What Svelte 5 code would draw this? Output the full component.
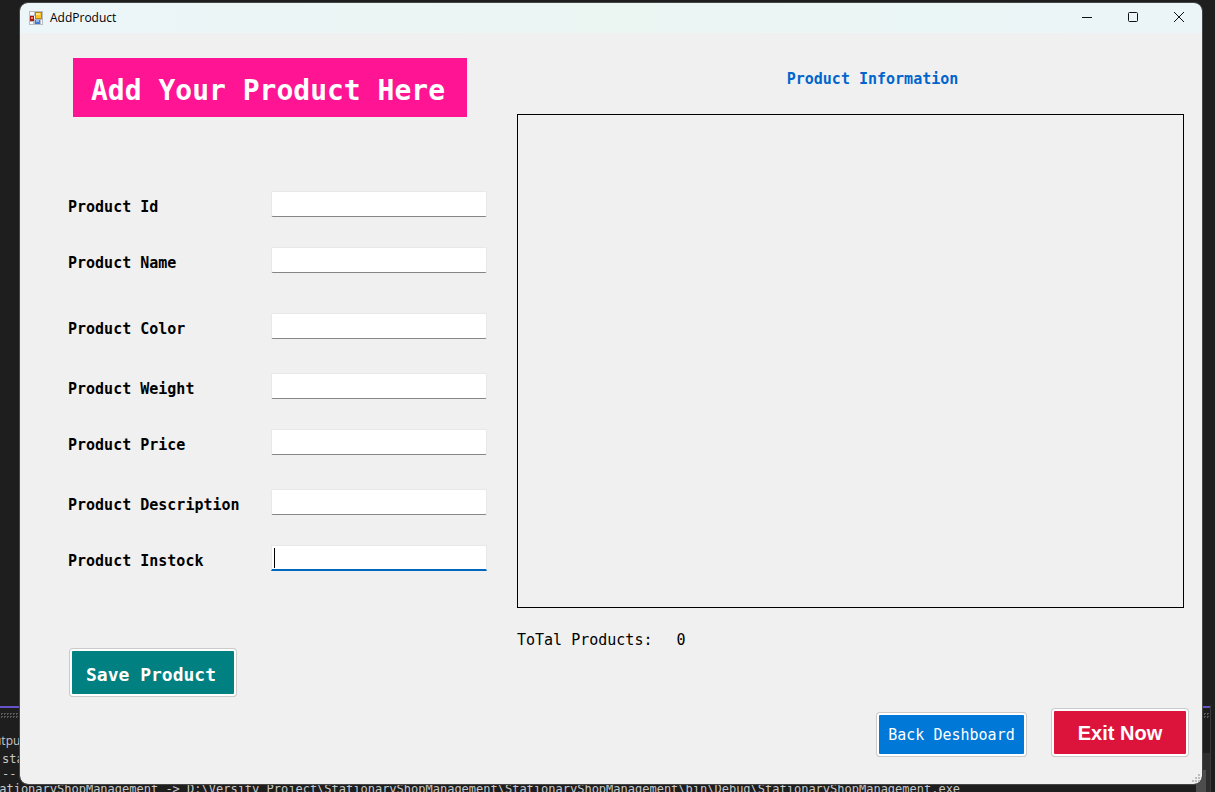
<script>
  const fields = [
    { id: 'product-id', label: 'Product Id', space: '' },
    { id: 'product-name', label: 'Product Name', space: '' },
    { id: 'product-color', label: 'Product Color', space: 'wide' },
    { id: 'product-weight', label: 'Product Weight', space: 'medium' },
    { id: 'product-price', label: 'Product Price', space: '' },
    { id: 'product-description', label: 'Product Description', space: 'medium' },
    { id: 'product-instock', label: 'Product Instock', space: '' }
  ];

  let values = $state(fields.map(() => ''));
  let active = $state('product-instock');
  let total = $state(0);

  function save(event) {
    event.preventDefault();
    total += 1;
    values = fields.map(() => '');
  }
</script>

<div class="desktop">
  <div class="console">
    <div class="console-bar"></div>
    <div class="console-title">utput</div>
    <div class="console-line">sta</div>
    <div class="console-line">--</div>
    <div class="console-line path">tationaryShopManagement -&gt; D:\Versity Project\StationaryShopManagement\StationaryShopManagement\bin\Debug\StationaryShopManagement.exe</div>
    <div class="scroll-track"><div class="scroll-thumb"></div></div>
  </div>

  <div class="window">
    <header class="titlebar">
      <svg class="app-icon" width="14" height="14" viewBox="0 0 14 14" shape-rendering="crispEdges" aria-hidden="true">
        <rect width="14" height="14" fill="#b9bcc3" />
        <rect x="1" y="1" width="4" height="3" fill="#f5f6f8" />
        <rect x="1" y="11" width="3" height="2" fill="#f5f6f8" />
        <rect x="12" y="9" width="1" height="4" fill="#f5f6f8" />
        <rect x="5" y="5" width="1" height="3" fill="#f5f6f8" />
        <rect x="1" y="5" width="4" height="5" fill="#a91b12" />
        <rect x="2" y="6" width="2" height="2" fill="#ef8b7a" />
        <rect x="6" y="1" width="7" height="7" fill="#b98508" />
        <rect x="7" y="2" width="5" height="5" fill="#fbc62b" />
        <rect x="7" y="2" width="4" height="2" fill="#ffe28a" />
        <rect x="6" y="9" width="5" height="4" fill="#3c78d8" />
        <rect x="7" y="9" width="3" height="2" fill="#8db8f5" />
      </svg>
      <span class="caption">AddProduct</span>
      <div class="window-buttons">
        <button type="button" aria-label="Minimize">
          <svg width="12" height="12" viewBox="0 0 12 12"><path d="M1 5.5h10" /></svg>
        </button>
        <button type="button" aria-label="Maximize">
          <svg width="12" height="12" viewBox="0 0 12 12"><rect x="1.5" y="0.5" width="9" height="9" rx="1" /></svg>
        </button>
        <button type="button" aria-label="Close">
          <svg width="12" height="12" viewBox="0 0 12 12"><path d="M1 0l10 10M11 0L1 10" /></svg>
        </button>
      </div>
    </header>

    <main>
      <section class="entry">
        <h1>Add Your Product Here</h1>
        <form onsubmit={save}>
          {#each fields as field, i}
            <div class="row {field.space}" class:active={active === field.id}>
              <label for={field.id}>{field.label}</label>
              <div class="box">
                <input id={field.id} type="text" bind:value={values[i]} onfocus={() => (active = field.id)} />
                {#if active === field.id && values[i] === ''}<span class="caret"></span>{/if}
              </div>
            </div>
          {/each}
          <button class="action save" type="submit">Save Product</button>
        </form>
      </section>

      <section class="info">
        <h2>Product Information</h2>
        <div class="products"></div>
        <p class="total"><span>ToTal Products:</span><span>{total}</span></p>
        <div class="actions">
          <button class="action back" type="button">Back Deshboard</button>
          <button class="action exit" type="button">Exit Now</button>
        </div>
      </section>
    </main>

    <svg class="grip" width="8" height="8" viewBox="0 0 8 8" shape-rendering="crispEdges" aria-hidden="true">
      <path d="M6 0h2v2h-2zM6 3h2v2h-2zM3 3h2v2h-2zM0 6h2v2h-2zM3 6h2v2h-2zM6 6h2v2h-2z" />
    </svg>
  </div>
</div>

<style>
  :global(body) {
    margin: 0;
    background: #1e1e1e;
  }

  .desktop {
    position: relative;
    box-sizing: border-box;
    display: flex;
    min-height: 100vh;
    padding: 3px 13px 8px 20px;
    overflow: hidden;
    background: #1e1e1e;
    font-family: "DejaVu Sans Mono", monospace;
  }

  /* Editor output pane behind the window */
  .console {
    position: absolute;
    left: 0;
    right: 4px;
    bottom: 0;
    display: flex;
    flex-direction: column;
    height: 87px;
    overflow: hidden;
    border-right: 1px solid #3a3a3d;
    box-sizing: border-box;
    color: #c8c8c8;
    font-size: 12px;
    line-height: 15px;
    white-space: nowrap;
  }

  .console > div {
    flex-shrink: 0;
  }

  .console-bar {
    height: 13px;
    border-top: 2px solid #6652c6;
    margin-top: 1px;
    box-sizing: border-box;
  }

  .console-bar::after {
    content: "";
    display: block;
    height: 6px;
    margin-top: 5px;
    background: conic-gradient(#5a5a5a 25%, transparent 0) 0 0 / 3px 3px;
  }

  .console-title {
    margin: 14px 0 4px -6px;
    font-family: "Open Sans", sans-serif;
  }

  .console-line {
    padding-left: 2px;
  }

  .console-line.path {
    padding: 0;
    margin-left: -8px;
  }

  .scroll-track {
    position: absolute;
    right: 0;
    bottom: 0;
    width: 14px;
    height: 39px;
    background: #2e2e2e;
  }

  .scroll-thumb {
    height: 22px;
    margin: 17px 4px 0 0;
    background: #4d4d4d;
  }

  .window {
    position: relative;
    display: flex;
    flex: 1;
    flex-direction: column;
    border-radius: 8px;
    overflow: hidden;
    background: #f0f0f0;
    outline: 1px solid #454545;
    color: #000;
  }

  .titlebar {
    display: flex;
    align-items: center;
    height: 30px;
    padding-left: 9px;
    background: linear-gradient(90deg, #ecf5f8, #ebf6f3 50%, #ebf5f8);
    font: 12px/16px "Open Sans", sans-serif;
  }

  .caption {
    flex: 1;
    margin-left: 7px;
  }

  .window-buttons {
    display: flex;
  }

  .window-buttons button {
    display: grid;
    place-items: center;
    width: 46px;
    height: 30px;
    padding: 0;
    border: 0;
    background: none;
  }

  .window-buttons svg {
    fill: none;
    stroke: #111;
  }

  main {
    display: grid;
    grid-template-columns: 419px minmax(0, 1fr);
    column-gap: 30px;
    flex: 1;
    padding: 25px 14px 28px 48px;
  }

  h1 {
    width: fit-content;
    margin: 0 0 74px 5px;
    padding: 15px 22px 8px 18px;
    background: #ff1493;
    color: #fff;
    font-size: 28px;
    line-height: 36px;
    white-space: nowrap;
  }

  form {
    display: flex;
    flex-direction: column;
    align-items: stretch;
  }

  .row {
    display: flex;
    justify-content: space-between;
    align-items: center;
    margin-bottom: 30px;
  }

  .row.wide {
    margin-top: 10px;
  }

  .row.medium {
    margin-top: 4px;
  }

  label {
    padding-top: 6px;
    font-size: 15px;
    line-height: 20px;
    font-weight: bold;
  }

  .box {
    position: relative;
    width: 216px;
    height: 26px;
  }

  input {
    display: block;
    box-sizing: border-box;
    width: 100%;
    height: 26px;
    padding: 0 4px;
    border: 1px solid #e8e8e8;
    border-bottom-color: #868686;
    border-radius: 2px;
    outline: 0;
    background: #fff;
    font: 15px/20px "DejaVu Sans Mono", monospace;
  }

  .active input {
    border-bottom: 2px solid #0067c0;
    border-radius: 0;
  }

  .caret {
    position: absolute;
    left: 3px;
    top: 3px;
    width: 1px;
    height: 20px;
    background: #000;
  }

  .action {
    box-sizing: border-box;
    padding: 0;
    border: 2px solid #fff;
    border-radius: 3px;
    box-shadow: 0 0 0 1px #cbcbcb, 0 1px 0 0 #b0b0b0;
    color: #fff;
    white-space: nowrap;
  }

  .save {
    width: 166px;
    height: 47px;
    margin: 48px 0 0 2px;
    padding: 4px 4px 0 0;
    background: #008080;
    font: bold 18px/24px "DejaVu Sans Mono", monospace;
  }

  .info {
    display: flex;
    flex-direction: column;
  }

  h2 {
    margin: 11px 0 25px;
    padding-left: 40px;
    color: #0066cc;
    font-size: 15px;
    line-height: 20px;
    text-align: center;
  }

  .products {
    flex: 1;
    min-height: 240px;
    margin-right: 4px;
    border: 1px solid #000;
  }

  .total {
    display: flex;
    gap: 24px;
    margin: 22px 0 59px;
    font-size: 15px;
    line-height: 20px;
  }

  .actions {
    display: flex;
    justify-content: flex-end;
    align-items: flex-end;
    gap: 26px;
  }

  .back {
    width: 149px;
    height: 43px;
    background: #0078d7;
    font: 15px/20px "DejaVu Sans Mono", monospace;
  }

  .exit {
    width: 136px;
    height: 47px;
    background: #dc143c;
    font: bold 20px/24px "Liberation Sans", Arial, sans-serif;
  }

  .grip {
    position: absolute;
    right: 2px;
    bottom: 2px;
    fill: #bdbdbd;
  }
</style>
